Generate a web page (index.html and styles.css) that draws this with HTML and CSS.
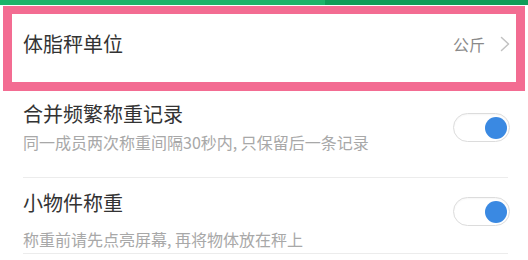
FILE: index.html
```html
<!DOCTYPE html>
<html lang="zh-CN">
<head>
<meta charset="utf-8">
<link rel="stylesheet" href="styles.css">
</head>
<body>
<div class="topbar"></div>
<div class="highlight">
  <div class="unit-row">
    <span class="title">体脂秤单位</span>
    <span class="value">公斤</span>
    <svg class="chev" width="10" height="16" viewBox="0 0 10 16"><path d="M1.5 1.5 L8.5 8 L1.5 14.5" fill="none" stroke="#c2c2c2" stroke-width="1.5" stroke-linecap="round" stroke-linejoin="round"/></svg>
  </div>
</div>
<div class="list">
  <div class="row row-a">
    <div class="texts">
      <div class="title">合并频繁称重记录</div>
      <div class="sub">同一成员两次称重间隔30秒内, 只保留后一条记录</div>
    </div>
    <div class="toggle"><span class="knob"></span></div>
  </div>
  <div class="row row-b">
    <div class="texts">
      <div class="title">小物件称重</div>
      <div class="sub">称重前请先点亮屏幕, 再将物体放在秤上</div>
    </div>
    <div class="toggle"><span class="knob"></span></div>
  </div>
</div>
</body>
</html>
```
FILE: styles.css
```css
html, body {
  margin: 0;
  padding: 0;
  background: #ffffff;
}
body {
  width: 528px;
  height: 260px;
  overflow: hidden;
  font-family: "Noto Sans CJK SC", "Noto Sans", sans-serif;
  color: #333333;
}
.topbar {
  height: 5px;
  background: linear-gradient(to right, #1cb46a 0, #1cb46a 325px, #0f9d58 325px, #0f9d58 100%);
}
.highlight {
  margin: 1px 3px 0 3px;
  border-style: solid;
  border-color: #f36c92;
  border-width: 8px 9px 9px 9px;
  height: 68px;
  box-sizing: content-box;
}
.unit-row {
  height: 68px;
  display: flex;
  align-items: center;
  padding: 0 6px 8px 11px;
  box-sizing: border-box;
}
.unit-row .title {
  flex: 1;
  font-size: 20px;
  line-height: 28px;
  color: #333333;
}
.unit-row .value {
  font-size: 16px;
  line-height: 22px;
  color: #8a8a8a;
  margin-right: 15px;
}
.chev {
  display: block;
}
.list {
  padding: 0 18px 0 23px;
}
.row {
  display: flex;
  align-items: flex-start;
  border-bottom: 1px solid #ececec;
}
.row .texts {
  flex: 1;
}
.row .title {
  font-size: 20px;
  line-height: 28px;
  color: #333333;
}
.row .sub {
  font-size: 16px;
  line-height: 20px;
  color: #a8a8a8;
}
.row-a {
  padding: 9px 0 25px 0;
  margin-right: 2px;
}
.row-a .sub {
  margin-top: 4px;
}
.row-a .toggle {
  margin-top: 13px;
}
.row-b {
  padding: 11px 0 4px 0;
  margin-right: 2px;
}
.row-b .sub {
  margin-top: 12px;
}
.row-b .toggle {
  margin-top: 8px;
}
.toggle {
  width: 57px;
  height: 29px;
  box-sizing: border-box;
  border: 1px solid #dcdcdc;
  border-radius: 15px;
  background: #ffffff;
  display: flex;
  align-items: center;
  justify-content: flex-end;
  padding-right: 2px;
  margin-right: -2px;
  box-shadow: inset 0 1px 2px rgba(0,0,0,0.04);
}
.knob {
  width: 22px;
  height: 22px;
  border-radius: 50%;
  background: #3a89e2;
}
```
